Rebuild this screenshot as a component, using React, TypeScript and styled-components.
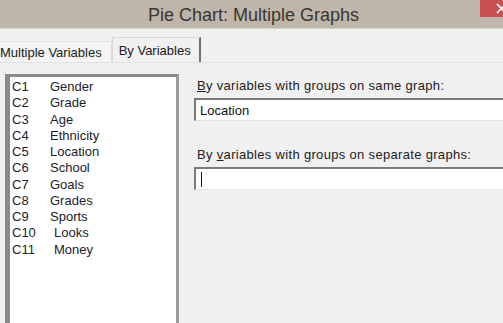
import * as React from 'react';
import styled, { createGlobalStyle } from 'styled-components';

const GlobalStyle = createGlobalStyle`
  html, body {
    margin: 0;
    padding: 0;
    background: #f0f0f0;
    overflow: hidden;
  }
`;

const columns = [
  { id: 'C1', name: 'Gender' },
  { id: 'C2', name: 'Grade' },
  { id: 'C3', name: 'Age' },
  { id: 'C4', name: 'Ethnicity' },
  { id: 'C5', name: 'Location' },
  { id: 'C6', name: 'School' },
  { id: 'C7', name: 'Goals' },
  { id: 'C8', name: 'Grades' },
  { id: 'C9', name: 'Sports' },
  { id: 'C10', name: 'Looks' },
  { id: 'C11', name: 'Money' },
];

class App extends React.Component {
  render() {
    return (
      <Window>
        <GlobalStyle />
        <TitleBar>
          <Title>Pie Chart: Multiple Graphs</Title>
          <CloseButton>
            <svg width="23" height="17" viewBox="0 0 23 17">
              <path d="M17 4 L26 13 M26 4 L17 13" stroke="#fff" strokeWidth="1.6" />
            </svg>
          </CloseButton>
        </TitleBar>
        <TabStrip>
          <Tab>Multiple Variables</Tab>
          <Tab active>By Variables</Tab>
        </TabStrip>
        <Panel>
          <ListBox>
            {columns.map((c) => (
              <ListItem key={c.id}>
                <ColId>{c.id}</ColId>
                <ColName wide={c.id.length > 2}>{c.name}</ColName>
              </ListItem>
            ))}
          </ListBox>
          <Fields>
            <Label>
              <u>B</u>y variables with groups on same graph:
            </Label>
            <TextBox>Location</TextBox>
            <Label spaced>
              By <u>v</u>ariables with groups on separate graphs:
            </Label>
            <TextBox>
              <Caret />
            </TextBox>
          </Fields>
        </Panel>
      </Window>
    );
  }
}

const Window = styled.div`
  width: 503px;
  height: 323px;
  background: #f0f0f0;
  font-family: 'Liberation Sans', Arial, sans-serif;
  font-size: 13px;
  color: #1e1e1e;
  overflow: hidden;
`;

const TitleBar = styled.div`
  height: 28px;
  background: #bfb5aa;
  border-bottom: 1px solid #d8d2ca;
  position: relative;
  display: flex;
  align-items: center;
  justify-content: center;
`;

const Title = styled.div`
  font-size: 18px;
  color: #3a3530;
  margin-left: 4px;
  margin-top: 2px;
`;

const CloseButton = styled.div`
  position: absolute;
  top: 0;
  left: 480px;
  width: 23px;
  height: 17px;
  background: #c75050;
  display: flex;
`;

const TabStrip = styled.div`
  margin-top: 8px;
  height: 25px;
  display: flex;
  align-items: flex-end;
  border-bottom: 1px solid #e2e2e2;
`;

const Tab = styled.div<{ active?: boolean }>`
  height: ${(p) => (p.active ? 25 : 21)}px;
  box-sizing: border-box;
  padding: ${(p) => (p.active ? '5px 8px 0 6px' : '3px 9px 0 0')};
  background: ${(p) => (p.active ? '#f0f0f0' : '#f4f4f4')};
  border-top: 1px solid ${(p) => (p.active ? '#dadada' : '#e4e4e4')};
  border-left: ${(p) => (p.active ? '1px solid #dadada' : 'none')};
  border-right: ${(p) => (p.active ? '2px solid #707070' : '1px solid #dcdcdc')};
  color: #202020;
  white-space: nowrap;
`;

const Panel = styled.div`
  display: flex;
  padding: 11px 0 0 5px;
  gap: 15px;
`;

const ListBox = styled.div`
  width: 174px;
  height: 270px;
  box-sizing: border-box;
  background: #fff;
  border-top: 3px solid #8a8a8a;
  border-left: 5px solid #8a8a8a;
  border-right: 3px solid #9a9a9a;
  padding: 2px 0 0 2px;
  flex-shrink: 0;
`;

const ListItem = styled.div`
  display: flex;
  height: 16.25px;
  line-height: 16px;
  color: #1b1b2a;
`;

const ColId = styled.span`
  width: 38px;
`;

const ColName = styled.span<{ wide?: boolean }>`
  padding-left: ${(p) => (p.wide ? 4 : 0)}px;
`;

const Fields = styled.div`
  flex: 1;
  display: flex;
  flex-direction: column;
  padding-top: 4px;
`;

const Label = styled.div<{ spaced?: boolean }>`
  height: 16px;
  line-height: 16px;
  padding-left: 3px;
  margin-top: ${(p) => (p.spaced ? 26 : 0)}px;
  margin-bottom: 4px;
  color: #222;
  letter-spacing: 0.32px;
  white-space: nowrap;
`;

const TextBox = styled.div`
  height: 23px;
  box-sizing: border-box;
  background: #fff;
  border-top: 2px solid #7a7a7a;
  border-left: 2px solid #7a7a7a;
  border-bottom: 1px solid #e3e3e3;
  padding: 2px 0 0 4px;
  line-height: 17px;
  color: #111;
`;

const Caret = styled.span`
  display: inline-block;
  width: 1px;
  height: 15px;
  margin-top: 1px;
  margin-left: 1px;
  background: #111;
`;

export default App;
